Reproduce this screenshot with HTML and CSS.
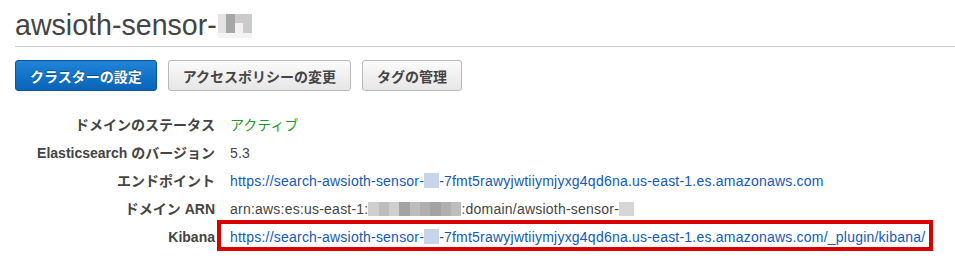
FILE: index.html
```html
<!DOCTYPE html>
<html lang="ja">
<head>
<meta charset="utf-8">
<link rel="stylesheet" href="styles.css">
</head>
<body>
<div class="page">
  <header class="head">
    <h1 class="title">awsioth-sensor-<span class="blur-title"><i class="g1"></i><i class="g2"></i><i class="g3"></i><i class="g3"></i><i class="g1"></i><i class="g2"></i><i class="g4"></i><i class="g3"></i><i class="g5"></i><i class="g5"></i><i class="g5"></i><i class="g5"></i></span></h1>
  </header>
  <div class="actions">
    <button class="btn btn-primary">クラスターの設定</button>
    <button class="btn">アクセスポリシーの変更</button>
    <button class="btn">タグの管理</button>
  </div>
  <dl class="details">
    <dt>ドメインのステータス</dt>
    <dd class="ok">アクティブ</dd>
    <dt>Elasticsearch のバージョン</dt>
    <dd>5.3</dd>
    <dt>エンドポイント</dt>
    <dd><a class="link" href="#">https://search-awsioth-sensor-<span class="blur-blue"></span>-7fmt5rawyjwtiiymjyxg4qd6na.us-east-1.es.amazonaws.com</a></dd>
    <dt>ドメイン ARN</dt>
    <dd>arn:aws:es:us-east-1:<span class="blur-arn"><i class="a1"></i><i class="a2"></i><i class="a1"></i><i class="a3"></i><i class="a2"></i><i class="a4"></i><i class="a3"></i><i class="a4"></i><i class="a2"></i></span>:domain/awsioth-sensor-<span class="blur-grey"></span></dd>
    <dt>Kibana</dt>
    <dd><span class="highlight"><a class="link" href="#">https://search-awsioth-sensor-<span class="blur-blue"></span>-7fmt5rawyjwtiiymjyxg4qd6na.us-east-1.es.amazonaws.com/_plugin/kibana/</a></span></dd>
  </dl>
</div>
</body>
</html>
```
FILE: styles.css
```css
* { box-sizing: border-box; }
html, body { margin: 0; padding: 0; background: #fff; }
body {
  font-family: "Liberation Sans", "Noto Sans CJK JP", Arial, sans-serif;
  color: #444;
  width: 955px;
  height: 263px;
  overflow: hidden;
}
.page { padding-left: 15px; }
.head {
  height: 47px;
  border-bottom: 1px solid #cccccc;
  padding-top: 9px;
}
.title {
  margin: 0;
  font-weight: normal;
  font-size: 28.6px;
  line-height: 32px;
  color: #444;
  display: flex;
  align-items: center;
}
.blur-title {
  display: grid;
  grid-template-columns: repeat(4, 8.5px);
  grid-template-rows: 9px 10px 5px;
  margin-left: 1px;
  margin-top: 2px;
}
.blur-title i { display: block; }
.g1 { background: #e4e2e2; }
.g2 { background: #a6a6a6; }
.g3 { background: #cbcbcb; }
.g4 { background: #f6f1ef; }
.g5 { background: #f4f4f4; }

.actions {
  display: flex;
  gap: 11px;
  margin-top: 13px;
}
.btn {
  font-family: "Liberation Sans", "Noto Sans CJK JP", sans-serif;
  font-weight: bold;
  font-size: 14px;
  height: 31px;
  padding: 0 14px;
  border-radius: 3px;
  border: 1px solid #b9b9b9;
  background: linear-gradient(#fbfbfb, #e6e6e6);
  color: #444;
  cursor: pointer;
}
.btn-primary {
  border-color: #0b5394;
  background: linear-gradient(#1f84d8, #0864b7);
  color: #fff;
  text-shadow: 0 -1px 0 rgba(0,0,0,0.35);
}

.details {
  display: grid;
  grid-template-columns: 200px auto;
  column-gap: 15px;
  margin: 20px 0 0 0;
  font-size: 14px;
  line-height: 28px;
}
.details dt {
  font-weight: bold;
  text-align: right;
  color: #444;
}
.details dd { margin: 0; color: #444; white-space: nowrap; letter-spacing: 0.22px; }
.details dd.ok { color: #1f962e; letter-spacing: 0; }
.link { color: #1359b8; text-decoration: none; }
.blur-blue {
  display: inline-block;
  width: 15px;
  height: 15px;
  background: #c8d4ea;
  vertical-align: -2px;
}
.blur-grey {
  display: inline-block;
  width: 15px;
  height: 14px;
  background: #d6d6d6;
  vertical-align: -2px;
}
.blur-arn {
  display: inline-flex;
  width: 93px;
  height: 14px;
  vertical-align: -2px;
}
.blur-arn i { flex: 1; display: block; }
.a1 { background: #cfcfcf; }
.a2 { background: #bdbdbd; }
.a3 { background: #a3a3a3; }
.a4 { background: #b2aeae; }

.highlight {
  position: relative;
  display: inline-block;
}
.highlight::after {
  content: "";
  position: absolute;
  left: -13px;
  right: -8px;
  top: -3px;
  bottom: 0;
  border: 4px solid #d90000;
  pointer-events: none;
}
```
